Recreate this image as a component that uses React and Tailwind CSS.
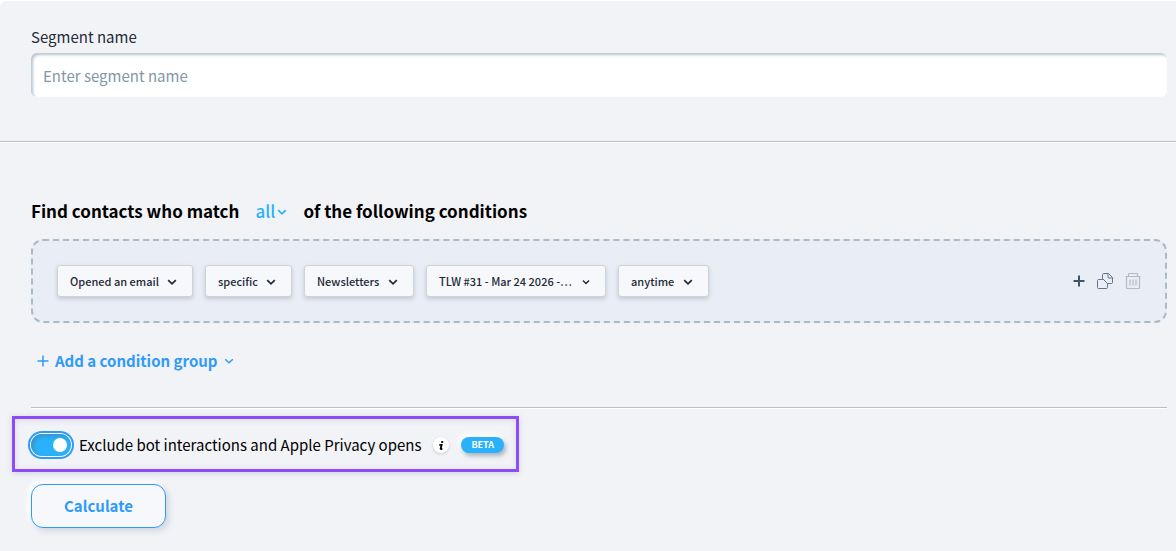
import React, { useState } from 'react';

const conditionFields = [
    { name: 'action', label: 'Action', value: 'Opened an email', small: false },
    { name: 'scope', label: 'Scope', value: 'specific', small: false },
    { name: 'type', label: 'Campaign type', value: 'Newsletters', small: false },
    { name: 'campaign', label: 'Campaign', value: 'TLW #31 - Mar 24 2026 -…', small: true },
    { name: 'period', label: 'Period', value: 'anytime', small: false },
];

function Chevron({ className, strokeWidth = 1.8 }) {
    return (
        <svg viewBox="0 0 10 10" fill="none" stroke="currentColor" strokeWidth={strokeWidth} className={className}>
            <path d="M1.2 3.2 5 6.8 8.8 3.2" />
        </svg>
    );
}

function Plus({ className, strokeWidth = 2 }) {
    return (
        <svg viewBox="0 0 12 12" fill="none" stroke="currentColor" strokeWidth={strokeWidth} className={className}>
            <path d="M6 0.5v11M0.5 6h11" />
        </svg>
    );
}

function CopyIcon() {
    return (
        <svg viewBox="0 0 16 16" fill="none" stroke="currentColor" strokeWidth="1" strokeLinejoin="round" className="size-4">
            <path d="M5.5 6.5h-4q-1 0-1 1v7q0 1 1 1h8q1 0 1-1v-4" />
            <path d="M5.500 6.500v-5q0-1 1-1h5l4 4v5q0 1-1 1h-4L6 6" />
            <path d="M11 .8v3.200q0 1 1 1h3.300" />
        </svg>
    );
}

function TrashIcon() {
    return (
        <svg viewBox="0 0 16 16" fill="none" stroke="currentColor" strokeWidth="1.2" className="size-4">
            <path d="M.5 3.500h15M1.500 3.500v11q0 1 1 1h11q1 0 1-1v-11M3.500 3.500v-2q0-1 1-1h7q1 0 1 1v2" />
            <path d="M5 6.500v6M8 6.500v6M11 6.500v6" />
        </svg>
    );
}

function ConditionSelect({ field }) {
    return (
        <div className="relative">
            <select
                name={field.name}
                aria-label={field.label}
                className="h-8 appearance-none rounded-[3px] border border-[#d0d2d5] bg-[#f7f8fb] pr-[33px] pl-3 text-[11px] font-medium text-[#232a38] shadow-[0_2px_4px_rgba(100,110,130,0.3)] focus:outline-none"
            >
                <option>{field.value}</option>
            </select>
            <Chevron className={`pointer-events-none absolute right-4 ${field.small ? 'top-[13px] h-2 w-2' : 'top-3 h-2.5 w-2.5'}`} />
        </div>
    );
}

function App() {
    const [name, setName] = useState('');
    const [excludeBots, setExcludeBots] = useState(true);

    return (
        <div className="min-h-screen bg-white pt-px font-['Noto_Sans_CJK_JP','Noto_Sans_CJK_SC',sans-serif] text-[#232a38]">
            <div className="min-h-[calc(100vh-1px)] rounded-tl-md bg-[#f2f3f7]">
                <section className="border-b border-[#b9bfbf] pt-6 pr-[9px] pb-11 pl-[31px] shadow-[0_1px_0_#fff]">
                    <label htmlFor="segment-name" className="block text-[15px] leading-6">Segment name</label>
                    <input
                        id="segment-name"
                        type="text"
                        value={name}
                        onChange={(e) => setName(e.target.value)}
                        placeholder="Enter segment name"
                        className="mt-1 block h-11 w-full rounded-md bg-white px-3 text-[15px] shadow-[inset_2px_2px_3px_#b8c5cf] placeholder:text-[#8297a8] focus:outline-none"
                    />
                </section>

                <section className="pt-[57px] pr-[9px] pl-[31px]">
                    <h2 className="flex items-center text-[17px] leading-6 font-bold text-black">
                        <span>Find contacts who match</span>
                        <span className="relative mx-4 font-medium text-[#2fb1fb]">
                            <select aria-label="Match type" className="block appearance-none bg-transparent pr-3 leading-6 focus:outline-none">
                                <option>all</option>
                            </select>
                            <Chevron className="pointer-events-none absolute top-2 right-0 h-2.5 w-2.5" />
                        </span>
                        <span>of the following conditions</span>
                    </h2>

                    <div className="mt-4 flex items-center justify-between rounded-xl border-2 border-dashed border-[#aabbc8] bg-[#e9eef6] p-6">
                        <div className="flex flex-wrap gap-3">
                            {conditionFields.map((field) => (
                                <ConditionSelect key={field.name} field={field} />
                            ))}
                        </div>
                        <div className="flex items-center gap-3 text-[#42536a]">
                            <button type="button" aria-label="Add condition">
                                <Plus className="size-3" />
                            </button>
                            <button type="button" aria-label="Duplicate condition" className="text-[#64748a]">
                                <CopyIcon />
                            </button>
                            <button type="button" aria-label="Delete condition" className="text-[#b3bbc8]">
                                <TrashIcon />
                            </button>
                        </div>
                    </div>

                    <button type="button" className="mt-6 ml-1.5 flex items-center text-[15px] leading-7 font-bold text-[#2f9bf8]">
                        <Plus className="mr-1.5 size-3" strokeWidth={1.5} />
                        Add a condition group
                        <Chevron className="ml-1.5 h-2.5 w-2.5" strokeWidth={1.5} />
                    </button>

                    <hr className="mt-8 border-[#b9bfbf] shadow-[0_1px_0_#fff]" />

                    <div className="mt-2 -ml-[19px] flex h-14 w-fit items-center border-3 border-[#904bf9] pt-0.5 pr-3 pl-4 shadow-[0_1px_6px_rgba(80,80,110,0.2),inset_0_1px_6px_rgba(80,80,110,0.15)]">
                        <label className="flex items-center text-[15px] text-black">
                            <input
                                type="checkbox"
                                role="switch"
                                checked={excludeBots}
                                onChange={(e) => setExcludeBots(e.target.checked)}
                                className="peer sr-only"
                            />
                            <span className="mr-2 flex h-[22px] w-10 items-center justify-end rounded-full bg-[#29b2fb] pr-1 shadow-[inset_2px_2px_4px_#3d8fc0] ring-2 ring-[#2f9bf8] ring-offset-1 not-peer-checked:justify-start not-peer-checked:bg-gray-300 not-peer-checked:pl-1">
                                <span className="size-3.5 rounded-full bg-white" />
                            </span>
                            Exclude bot interactions and Apple Privacy opens
                        </label>
                        <button type="button" aria-label="More information" className="ml-3 flex size-4 items-center justify-center rounded-full bg-white shadow-[0_1px_3px_rgba(100,110,130,0.3)]">
                            <svg viewBox="0 0 6 9" fill="none" stroke="black" strokeWidth="1.8" className="h-[9px] w-1.5">
                                <path d="M3.200 1h2" />
                                <path d="M1.300 3.800h1.500M3.900 3L2.500 8.200M2.400 8h1.900" />
                            </svg>
                        </button>
                        <span className="ml-3 rounded-full bg-[#29b2fb] px-2.5 text-[9px] leading-4 font-bold text-white shadow-[2px_3px_4px_rgba(100,115,135,0.5),-2px_-3px_5px_#fff]">
                            BETA
                        </span>
                    </div>

                    <button type="button" className="mt-3 h-11 rounded-xl border border-[#2f9bf8] bg-[#f7f8fc] px-8 text-[15px] font-bold text-[#2f9bf8] shadow-[3px_3px_6px_#cfd5de,-3px_-3px_5px_#fff]">
                        Calculate
                    </button>
                </section>
            </div>
        </div>
    );
}

export default App;
